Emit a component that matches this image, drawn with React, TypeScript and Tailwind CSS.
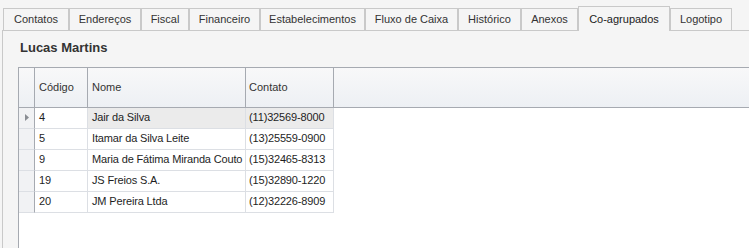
const tabs = [
  { label: "Contatos", w: "w-[66px]" },
  { label: "Endereços", w: "w-[72px]" },
  { label: "Fiscal", w: "w-[48px]" },
  { label: "Financeiro", w: "w-[71px]" },
  { label: "Estabelecimentos", w: "w-[105px]" },
  { label: "Fluxo de Caixa", w: "w-[93px]" },
  { label: "Histórico", w: "w-[63px]" },
  { label: "Anexos", w: "w-[57px]" },
  { label: "Co-agrupados", w: "w-[92px]", active: true },
  { label: "Logotipo", w: "w-[62px]" },
];

const rows = [
  { codigo: "4", nome: "Jair da Silva", contato: "(11)32569-8000" },
  { codigo: "5", nome: "Itamar da Silva Leite", contato: "(13)25559-0900" },
  { codigo: "9", nome: "Maria de Fátima Miranda Couto", contato: "(15)32465-8313" },
  { codigo: "19", nome: "JS Freios S.A.", contato: "(15)32890-1220" },
  { codigo: "20", nome: "JM Pereira Ltda", contato: "(12)32226-8909" },
];

function TabStrip() {
  return (
    <div className="flex h-[27px] items-end border-b border-[#c9c9c9] pl-px">
      {tabs.map((tab) =>
        tab.active ? (
          <div
            key={tab.label}
            className={`${tab.w} relative z-10 -mb-px flex h-[25px] items-start justify-center border border-b-0 border-[#c9c9c9] bg-[#f5f5f5] pt-[4px] text-[#222]`}
          >
            {tab.label}
          </div>
        ) : (
          <div
            key={tab.label}
            className={`${tab.w} flex h-[22px] items-center justify-center border border-b-0 border-[#c9c9c9] text-[#333]`}
          >
            {tab.label}
          </div>
        )
      )}
    </div>
  );
}

function GridHeader() {
  return (
    <div className="flex h-[40px] border-b border-[#a6aab1] bg-gradient-to-b from-[#f8f8f9] to-[#edf0f4] text-[#333]">
      <div className="w-[16px] shrink-0 border-r border-[#a6aab1]" />
      <div className="flex w-[53px] shrink-0 items-center border-r border-[#a6aab1] pl-[4px]">Código</div>
      <div className="flex w-[158px] shrink-0 items-center border-r border-[#a6aab1] pl-[4px]">Nome</div>
      <div className="flex w-[88px] shrink-0 items-center border-r border-[#a6aab1] pl-[3px]">Contato</div>
      <div className="flex-1" />
    </div>
  );
}

function GridRow({ row, selected }: { row: (typeof rows)[number]; selected: boolean }) {
  return (
    <div className="flex h-[21px] whitespace-nowrap tracking-[-0.15px]">
      <div className="flex w-[16px] shrink-0 items-center justify-center border-r border-b border-r-[#a6aab1] border-b-[#dcdfe4] bg-[#f1f2f4]">
        {selected && (
          <svg width="4" height="7" viewBox="0 0 4 7">
            <path d="M0 0 L4 3.5 L0 7 Z" fill="#8a8d93" />
          </svg>
        )}
      </div>
      <div className="flex w-[53px] shrink-0 items-center border-r border-b border-[#dcdfe4] bg-white pl-[4px]">
        {row.codigo}
      </div>
      <div
        className={`flex w-[158px] shrink-0 items-center overflow-hidden border-r border-b border-[#dcdfe4] pl-[4px] ${
          selected ? "bg-[#ebebeb]" : "bg-white"
        }`}
      >
        {row.nome}
      </div>
      <div
        className={`flex w-[88px] shrink-0 items-center border-r border-b border-[#dcdfe4] pl-[3px] ${
          selected ? "bg-[#ebebeb]" : "bg-white"
        }`}
      >
        {row.contato}
      </div>
    </div>
  );
}

export default function App() {
  return (
    <div
      className="flex h-[248px] w-[749px] flex-col overflow-hidden bg-[#f5f5f5] pl-[2px] text-[11px] text-[#1e1e1e]"
      style={{ fontFamily: '"Liberation Sans", Arial, sans-serif' }}
    >
      <div className="pt-[4px]">
        <TabStrip />
      </div>
      <div className="flex flex-1 flex-col border-l border-[#c9c9c9] pl-[15px]">
        <div className="pt-[7px] pl-[2px] text-[13px] font-bold text-[#333]">Lucas Martins</div>
        <div className="mt-[9px] flex flex-1 flex-col border-t border-l border-[#a6aab1] bg-white">
          <GridHeader />
          {rows.map((row, i) => (
            <GridRow key={row.codigo} row={row} selected={i === 0} />
          ))}
        </div>
      </div>
    </div>
  );
}
